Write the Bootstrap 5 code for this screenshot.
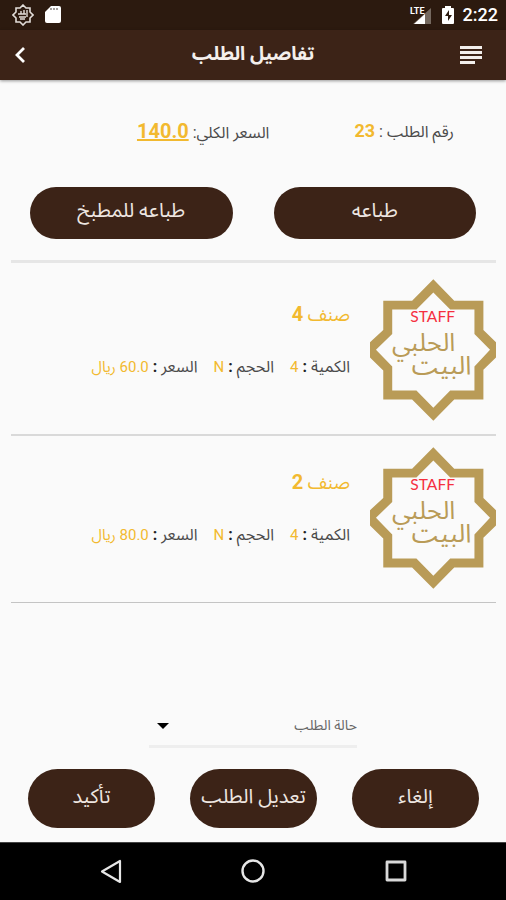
<!DOCTYPE html>
<html lang="ar" dir="rtl">
<head>
<meta charset="utf-8">
<meta name="viewport" content="width=device-width, initial-scale=1">
<title>تفاصيل الطلب</title>
<link href="https://cdn.jsdelivr.net/npm/bootstrap@5.3.0/dist/css/bootstrap.min.css" rel="stylesheet">
<style>
  :root { --brown: #3c2317; --brown-dark: #2c1a0f; --amber: #f2b92f; }
  body { background: #fafafa; color: #4a4a4a; font-family: Roboto, "Noto Sans Arabic", "DejaVu Sans", sans-serif; font-size: 16px; line-height: 24px; }
  svg { display: block; }
  .status-bar { background: var(--brown-dark); height: 30px; color: #fff; font-size: 18px; font-weight: 500; }
  .app-bar { background: var(--brown); height: 50px; padding: 0 24px 0 14px; box-shadow: 0 1px 3px rgba(0,0,0,.4); }
  .app-title { font-size: 19px; line-height: 24px; padding-bottom: 2px; font-weight: 700; color: #f4efec; }
  .icon-btn { color: #fff; background: none; border: 0; padding: 0; }
  .amber { color: var(--amber); }
  .summary { padding: 39px 52px 0; gap: 85px; }
  .order-no { font-size: 18px; }
  .total { font-size: 20px; }
  .btn-brown { --bs-btn-bg: var(--brown); --bs-btn-color: #eee6e1; --bs-btn-hover-bg: var(--brown-dark); --bs-btn-hover-color: #fff; --bs-btn-active-bg: var(--brown-dark); --bs-btn-active-color: #fff; --bs-btn-font-size: 20px; border: 0; padding: 0 0 6px; white-space: nowrap; }
  .print-row { padding: 42px 30px 21px; gap: 41px; }
  .print-row .btn { height: 52px; }
  .order-items { margin: 0 10px 0 11px; border-top: 3px solid #e6e6e6; }
  .order-item { height: 173px; padding-top: 16px; gap: 20px; border-bottom: 2px solid #d9d9d9; }
  .order-item + .order-item { height: 167px; padding-top: 11px; border-bottom: 1px solid #c4c4c4; }
  .item-logo { width: 126px; height: 142px; }
  .item-name { font-size: 18px; line-height: 28px; padding-top: 21px; margin-bottom: 26px; }
  .item-name strong { font-size: 20px; }
  .item-facts { gap: 16px; }
  .item-facts b { color: #222; }
  .item-facts .amber { font-size: 15px; }
  .state-box { width: 208px; }
  .state-select { border: 0; border-bottom: 3px solid #eee; border-radius: 0; background-color: transparent; color: #666; font-size: 14px; line-height: 24px; padding: 6px 0 8px 30px; background-position: left 8px center; background-size: 12px 6px; background-image: url("data:image/svg+xml,%3Csvg xmlns='http://www.w3.org/2000/svg' viewBox='0 0 12 6'%3E%3Cpath d='M0 0h12L6 6z'/%3E%3C/svg%3E"); }
  .action-row { padding: 21px 27px 14px 28px; gap: 35px; }
  .action-row .btn { height: 59px; }
  .system-nav { height: 58px; background: #000; border-top: 1px solid #444; gap: 118px; }
</style>
</head>
<body class="d-flex flex-column min-vh-100">
<svg class="d-none" aria-hidden="true">
  <symbol id="logo" viewBox="30 27 380 427">
    <path fill="#b99b57" fill-rule="evenodd" d="M221 27L284 92H372V180L410 217V263L372 300V390H284L221 454L157 390H70V302L30 263V217L70 180V92H157ZM221 67L170 118H97V192L48 240L97 290V363H170L221 415L272 363H345V290L392 240L345 192V118H272Z"/>
    <g text-anchor="middle" direction="rtl" fill="#b99b57" font-family="'Noto Sans Arabic','DejaVu Sans',sans-serif">
      <text x="219" y="157" direction="ltr" fill="#f5303f" font-family="Lato,sans-serif" font-size="47">STAFF</text>
      <text x="192" y="244" font-size="76">الحلبي</text>
      <text x="246" y="314" font-size="78">البيت</text>
    </g>
  </symbol>
</svg>

<div class="status-bar d-flex align-items-center justify-content-between ps-2 pe-2" dir="ltr">
  <div class="d-flex align-items-center gap-2 ps-1">
    <svg width="22" height="22" viewBox="0 0 22 22" fill="none" stroke="#e2ddd9"><path stroke-width="1.6" d="M11 1l3 3h4v4l3 3-3 3v4h-4l-3 3-3-3H4v-4l-3-3 3-3V4h4z"/><path stroke-width="1.4" d="M6 10h8M15 6v7M12 6v4M9 7v3M7 13h7M8 15h5"/></svg>
    <svg width="22" height="22" viewBox="0 0 22 22" fill="#fff"><path d="M9 2h8q2 0 2 2v13q0 2-2 2H5q-2 0-2-2V8z"/><path stroke="#6b625c" stroke-width="1.2" d="M9 4v2M12 4v2M15 4v2"/></svg>
  </div>
  <div class="d-flex align-items-center">
    <svg class="me-2" width="24" height="20" viewBox="0 0 24 20"><path fill="#75695f" d="M22 3v16H4z"/><path fill="#fff" d="M16 9v10H5z"/><text x="1" y="9" fill="#fff" font-family="Roboto,sans-serif" font-weight="700" font-size="9">LTE</text></svg>
    <svg class="me-2" width="14" height="20" viewBox="0 0 14 20"><path fill="#fff" d="M4 1h6v2h2q1 0 1 1v14q0 1-1 1H2q-1 0-1-1V4q0-1 1-1h2z"/><path fill="#2c1a0f" d="M8 5l-4 6h3v5l4-6H8z"/></svg>
    <span>2:22</span>
  </div>
</div>

<header class="app-bar d-flex align-items-center justify-content-between">
  <button class="icon-btn" aria-label="القائمة"><svg width="22" height="20" viewBox="0 0 22 20" fill="#f3efed"><path d="M0 1h22v3H0zM0 6h22v3H0zM0 11h22v3H0zM0 16h15v3H0z"/></svg></button>
  <h1 class="app-title m-0">تفاصيل الطلب</h1>
  <button class="icon-btn" aria-label="رجوع"><svg width="32" height="16" viewBox="0 0 32 16" fill="none" stroke="#fff" stroke-width="2.8"><path d="M10 1L3 8l7 7"/></svg></button>
</header>

<main class="flex-grow-1 d-flex flex-column">
  <section class="summary d-flex text-nowrap">
    <div>رقم الطلب : <strong class="amber order-no">23</strong></div>
    <div>السعر الكلي: <strong class="amber total text-decoration-underline">140.0</strong></div>
  </section>
  <div class="print-row d-flex">
    <button class="btn btn-brown rounded-pill w-50">طباعه</button>
    <button class="btn btn-brown rounded-pill w-50">طباعه للمطبخ</button>
  </div>

  <section class="order-items">
    <article class="order-item d-flex">
      <svg class="item-logo flex-shrink-0" role="img" aria-label="البيت الحلبي"><use href="#logo"/></svg>
      <div>
        <h2 class="item-name amber fw-normal">صنف <strong>4</strong></h2>
        <div class="item-facts d-flex text-nowrap">
          <span>الكمية <b>:</b> <span class="amber">4</span></span>
          <span>الحجم <b>:</b> <span class="amber">N</span></span>
          <span>السعر <b>:</b> <span class="amber">60.0 ريال</span></span>
        </div>
      </div>
    </article>
    <article class="order-item d-flex">
      <svg class="item-logo flex-shrink-0" role="img" aria-label="البيت الحلبي"><use href="#logo"/></svg>
      <div>
        <h2 class="item-name amber fw-normal">صنف <strong>2</strong></h2>
        <div class="item-facts d-flex text-nowrap">
          <span>الكمية <b>:</b> <span class="amber">4</span></span>
          <span>الحجم <b>:</b> <span class="amber">N</span></span>
          <span>السعر <b>:</b> <span class="amber">80.0 ريال</span></span>
        </div>
      </div>
    </article>
  </section>

  <div class="state-box mt-auto mx-auto">
    <select class="form-select state-select" aria-label="حالة الطلب"><option>حالة الطلب</option></select>
  </div>
  <div class="action-row d-flex">
    <button class="btn btn-brown rounded-pill w-100">إلغاء</button>
    <button class="btn btn-brown rounded-pill w-100">تعديل الطلب</button>
    <button class="btn btn-brown rounded-pill w-100">تأكيد</button>
  </div>
</main>

<nav class="system-nav d-flex align-items-center justify-content-center" dir="ltr" aria-label="النظام">
  <button class="icon-btn" aria-label="السابق"><svg width="24" height="26" viewBox="0 0 24 26" fill="none" stroke="#e6e6e6" stroke-width="2.2" stroke-linejoin="round"><path d="M22 2v21L4 12.500z"/></svg></button>
  <button class="icon-btn" aria-label="الرئيسية"><svg width="26" height="26" viewBox="0 0 26 26" fill="none" stroke="#e6e6e6" stroke-width="2.4"><circle cx="13" cy="12" r="10.500"/></svg></button>
  <button class="icon-btn" aria-label="التطبيقات"><svg width="24" height="26" viewBox="0 0 24 26" fill="none" stroke="#d9d9d9" stroke-width="2.8" stroke-linejoin="round"><path d="M3 3h18v18H3z"/></svg></button>
</nav>
<script src="https://cdn.jsdelivr.net/npm/bootstrap@5.3.0/dist/js/bootstrap.bundle.min.js"></script>
</body>
</html>
